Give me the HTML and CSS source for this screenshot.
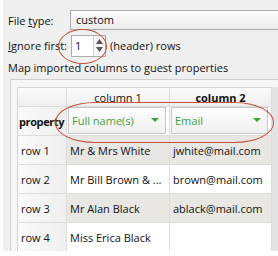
FILE: index.html
```html
<html lang="en">
<head>
    <meta charset="UTF-8">
    <title>Import guests</title>
    <link rel="stylesheet" href="styles.css">
</head>
<body>
    <div class="panel">
        <div class="field-row first">
            <span class="label">File <u>t</u>ype:</span>
            <div class="textbox">custom</div>
        </div>
        <div class="field-row second">
            <span class="label"><u>I</u>gnore first:</span>
            <div class="spinbox">
                <span class="spin-value">1</span>
                <span class="spin-buttons">
                    <svg width="7" height="5" viewBox="0 0 7 5"><path d="M0 5 L3.5 0 L7 5 Z" fill="#555"/></svg>
                    <svg width="7" height="5" viewBox="0 0 7 5"><path d="M0 0 L3.5 5 L7 0 Z" fill="#555"/></svg>
                </span>
            </div>
            <span class="suffix">(header) rows</span>
        </div>
        <div class="caption">Map imported columns to guest properties</div>
        <div class="frame">
            <div class="grid">
                <div class="cell corner"></div>
                <div class="cell col-head">column 1</div>
                <div class="cell col-head bold">column 2</div>

                <div class="cell row-head bold">property</div>
                <div class="cell combo-cell"><div class="combo">Full name(s)<span class="arrow"></span></div></div>
                <div class="cell combo-cell"><div class="combo">Email<span class="arrow"></span></div></div>

                <div class="cell row-head">row 1</div>
                <div class="cell alt">Mr &amp; Mrs White</div>
                <div class="cell alt">jwhite@mail.com</div>

                <div class="cell row-head">row 2</div>
                <div class="cell">Mr Bill Brown &amp; ...</div>
                <div class="cell">brown@mail.com</div>

                <div class="cell row-head">row 3</div>
                <div class="cell alt">Mr Alan Black</div>
                <div class="cell alt">ablack@mail.com</div>

                <div class="cell row-head">row 4</div>
                <div class="cell">Miss Erica Black</div>
                <div class="cell"></div>
            </div>
        </div>
        <div class="ring ring-spin"></div>
        <div class="ring ring-combo"></div>
    </div>
</body>
</html>
```
FILE: styles.css
```css
body { margin: 0; background: #fff; font-family: "Open Sans", "Liberation Sans", sans-serif; font-size: 11px; color: #111; }
.panel { position: relative; height: 251px; margin-left: 3px; background: #f0f0f0; padding: 0 0 0 5px; overflow: hidden; }
.field-row { display: flex; align-items: center; }
.field-row.first { padding-top: 10px; height: 20px; }
.field-row.second { margin-top: 5px; height: 21px; }
.label { width: 62px; }
.textbox { flex: 1; height: 18px; line-height: 18px; padding-left: 5px; border: 1px solid #ababab; border-right: none; background: linear-gradient(#fcfcfc, #ececec); }
.spinbox { display: flex; margin-left: 1px; width: 33px; height: 20px; border: 1px solid #ababab; background: #fff; }
.spin-value { flex: 1; line-height: 20px; padding-left: 3px; }
.spin-buttons { width: 11px; border-left: 1px solid #d4d4d4; display: flex; flex-direction: column; justify-content: center; align-items: center; gap: 3px; background: #f6f6f6; }
.suffix { margin-left: 4px; }
.caption { margin-top: 3px; height: 18px; line-height: 18px; }
.frame { margin: 2px 0 0 2px; border: 1px solid #cfcfcf; border-right: none; background: #f6f6f6; padding: 7px 0 0 6px; }
.grid { display: grid; grid-template-columns: 50px 103px 102px 10px; grid-template-rows: 20px 29px repeat(4, 29px); }
.grid > .cell:nth-child(3n) { grid-column: 3; }
.grid::after { content: ""; grid-column: 4; grid-row: 1 / 7; background: #e4e4e4; }
.cell { display: flex; align-items: center; padding-left: 3px; background: #fff; border-right: 1px solid #dcdcdc; border-bottom: 1px solid #dcdcdc; white-space: nowrap; overflow: hidden; }
.corner { background: linear-gradient(#fbfbfb, #efefef); border-top: 1px solid #d4d4d4; border-left: 1px solid #d4d4d4; }
.col-head { justify-content: center; padding-left: 0; background: linear-gradient(#fbfbfb, #efefef); border-top: 1px solid #d4d4d4; }
.row-head { background: linear-gradient(90deg, #fafafa, #efefef); border-left: 1px solid #d4d4d4; }
.row-head.bold { padding-left: 1px; letter-spacing: -0.4px; }
.bold { font-weight: 700; }
.alt { background: #e9e7e4; }
.combo-cell { padding: 0 3px 2px 1px; }
.combo { flex: 1; height: 25px; display: flex; align-items: center; justify-content: space-between; padding: 0 6px 0 3px; border: 1px solid #c8c8c8; background: linear-gradient(#fdfdfd, #f0f0f0); color: #3da23d; }
.arrow { width: 0; height: 0; border-left: 4px solid transparent; border-right: 4px solid transparent; border-top: 4px solid #3da23d; }
.ring { position: absolute; border: 1.5px solid #c4533f; }
.ring-spin { left: 55px; top: 29px; width: 47px; height: 33px; border-radius: 50%; }
.ring-combo { left: 52px; top: 102px; width: 217px; height: 39px; border-radius: 40px / 20px; }
```
